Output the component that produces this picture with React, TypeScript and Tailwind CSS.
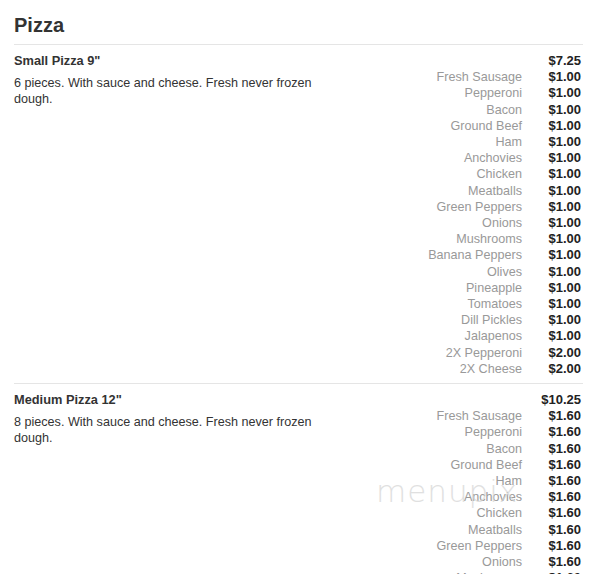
const toppings = [
  "Fresh Sausage",
  "Pepperoni",
  "Bacon",
  "Ground Beef",
  "Ham",
  "Anchovies",
  "Chicken",
  "Meatballs",
  "Green Peppers",
  "Onions",
  "Mushrooms",
  "Banana Peppers",
  "Olives",
  "Pineapple",
  "Tomatoes",
  "Dill Pickles",
  "Jalapenos",
]

type Item = {
  name: string
  desc: string
  price: string
  extras: { name: string; price: string }[]
}

const items: Item[] = [
  {
    name: 'Small Pizza 9"',
    desc: "6 pieces. With sauce and cheese. Fresh never frozen dough.",
    price: "$7.25",
    extras: [
      ...toppings.map((t) => ({ name: t, price: "$1.00" })),
      { name: "2X Pepperoni", price: "$2.00" },
      { name: "2X Cheese", price: "$2.00" },
    ],
  },
  {
    name: 'Medium Pizza 12"',
    desc: "8 pieces. With sauce and cheese. Fresh never frozen dough.",
    price: "$10.25",
    extras: [
      ...toppings.map((t) => ({ name: t, price: "$1.60" })),
      { name: "2X Pepperoni", price: "$3.20" },
      { name: "2X Cheese", price: "$3.20" },
    ],
  },
]

function PriceRow({ name, price }: { name: string; price: string }) {
  return (
    <div className="flex justify-end leading-[16.2px]">
      <span className="text-[#999]">{name}</span>
      <span className="w-[59px] text-right text-[13px] font-bold text-[#222]">{price}</span>
    </div>
  )
}

function MenuItem({ item }: { item: Item }) {
  return (
    <div className="flex border-t border-[#e5e5e5] pt-[8px] pb-[6px]">
      <div className="w-[320px] shrink-0">
        <div className="text-[12.8px] font-bold leading-[16.2px] text-[#333]">{item.name}</div>
        <p className="mt-[6px] leading-[16px] text-[#333]">{item.desc}</p>
      </div>
      <div className="flex-1 pr-[2px]">
        <PriceRow name="" price={item.price} />
        {item.extras.map((e) => (
          <PriceRow key={e.name} name={e.name} price={e.price} />
        ))}
      </div>
    </div>
  )
}

export default function App() {
  return (
    <div className="relative h-[574px] w-[613px] overflow-hidden bg-white font-['Liberation_Sans',Arial,sans-serif] text-[12.6px]">
      <div className="w-[583px] pl-[14px]">
        <h2 className="mt-[13px] mb-[7px] text-[20px] leading-[24px] font-bold text-[#333]">Pizza</h2>
        {items.map((item) => (
          <MenuItem key={item.name} item={item} />
        ))}
      </div>
      <div className="pointer-events-none absolute top-[468px] left-[376px] font-['DejaVu_Sans',sans-serif] text-[31px] font-extralight tracking-[1px] text-[#d4d4d4] opacity-70">
        menupix
      </div>
    </div>
  )
}
